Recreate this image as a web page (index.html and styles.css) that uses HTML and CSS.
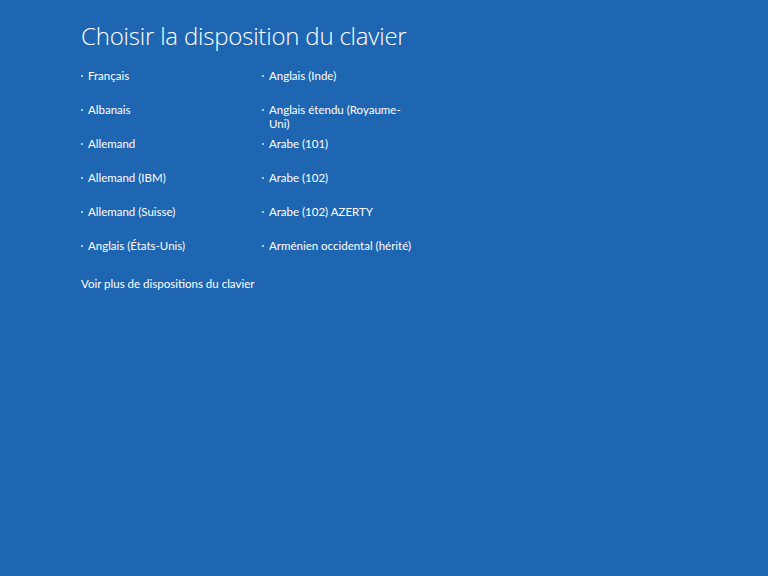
FILE: index.html
```html
<!DOCTYPE html>
<html lang="fr">
<head>
<meta charset="utf-8">
<title>Choisir la disposition du clavier</title>
<link rel="stylesheet" href="styles.css">
</head>
<body>
<main class="page">
  <h1 class="title">Choisir la disposition du clavier</h1>
  <ul class="layouts">
    <li class="item">Français</li>
    <li class="item">Anglais (Inde)</li>
    <li class="item">Albanais</li>
    <li class="item">Anglais étendu (Royaume-Uni)</li>
    <li class="item">Allemand</li>
    <li class="item">Arabe (101)</li>
    <li class="item">Allemand (IBM)</li>
    <li class="item">Arabe (102)</li>
    <li class="item">Allemand (Suisse)</li>
    <li class="item">Arabe (102) AZERTY</li>
    <li class="item">Anglais (États-Unis)</li>
    <li class="item">Arménien occidental (hérité)</li>
  </ul>
  <a class="more" href="#">Voir plus de dispositions du clavier</a>
</main>
</body>
</html>
```
FILE: styles.css
```css
html, body {
  margin: 0;
  padding: 0;
  height: 100%;
}
body {
  background: #1f66b2;
  color: #ffffff;
  font-family: "Lato", "Noto Sans", "DejaVu Sans", sans-serif;
}
.page {
  padding: 20px 0 0 81px;
}
.title {
  margin: 0;
  font-weight: 300;
  font-size: 24px;
  line-height: 32px;
  font-family: "Open Sans", "Noto Sans", sans-serif;
  letter-spacing: -0.2px;
}
.layouts {
  list-style: none;
  margin: 17px 0 0 0;
  padding: 0;
  display: grid;
  grid-template-columns: 181px 181px;
  grid-auto-rows: 34px;
}
.item {
  position: relative;
  padding-left: 7px;
  font-size: 11.5px;
  line-height: 14px;
  max-width: 148px;
}
.item::before {
  content: "";
  position: absolute;
  left: 0;
  top: 6px;
  width: 2px;
  height: 2px;
  background: #8fd0f0;
}
.more {
  display: block;
  margin-top: 4px;
  color: #ffffff;
  text-decoration: none;
  font-size: 11.5px;
  line-height: 14px;
}
```
